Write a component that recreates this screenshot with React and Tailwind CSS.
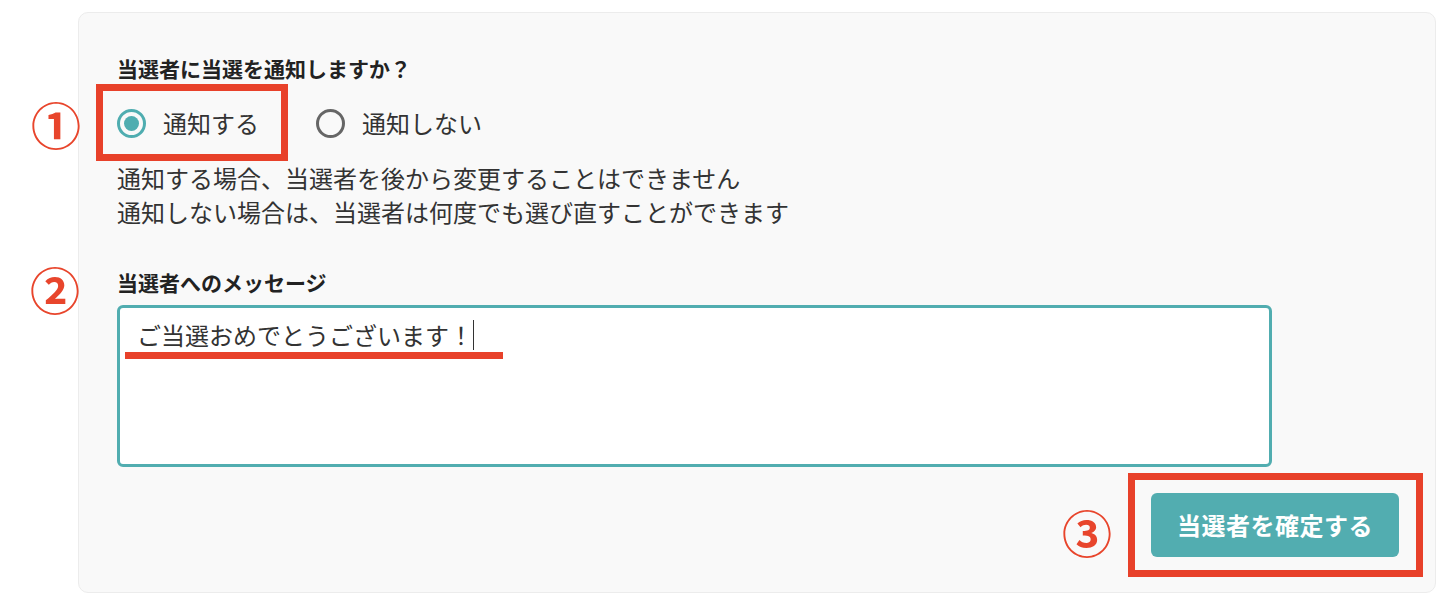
import React from 'react';

const jp = { fontFamily: '"Noto Sans CJK JP", "Noto Sans", sans-serif' };

// 注釈用の丸数字
const Marker = ({ label, className }) => (
    <div
        className={`absolute flex items-center justify-center w-[48px] h-[48px] text-[50px] leading-none font-bold text-[#e8452c] ${className}`}
    >
        {label}
    </div>
);

const Radio = ({ checked, label }) => (
    <label className="flex items-center gap-[17px] cursor-pointer">
        <span
            className={`w-[29px] h-[29px] rounded-full border-[3px] flex items-center justify-center ${
                checked ? 'border-[#4fadb0]' : 'border-[#666]'
            }`}
        >
            {checked && <span className="w-[15px] h-[15px] rounded-full bg-[#4fadb0]" />}
        </span>
        <span className="text-[24px] leading-[36px] text-[#333]">{label}</span>
    </label>
);

export default function App() {
    return (
        <div className="relative min-h-screen bg-white pl-[78px] pr-[18px] pt-[12px]" style={jp}>
            <div className="bg-[#f9f9f9] border border-[#ececec] rounded-[10px] pl-[38px] pr-[36px] pt-[40px] pb-[35px]">
                <h3 className="text-[21px] leading-[30px] font-bold text-[#222]">当選者に当選を通知しますか？</h3>

                <div className="flex items-center gap-[57px] mt-[22px]">
                    <Radio checked label="通知する" />
                    <Radio label="通知しない" />
                </div>

                <div className="mt-[20px] text-[24px] leading-[34px] text-[#333]">
                    <p>通知する場合、当選者を後から変更することはできません</p>
                    <p>通知しない場合は、当選者は何度でも選び直すことができます</p>
                </div>

                <h3 className="mt-[38px] text-[21px] leading-[30px] font-bold text-[#222]">当選者へのメッセージ</h3>

                <div className="mt-[8px] w-[1155px] h-[162px] bg-white border-[3px] border-[#51adb0] rounded-[6px] pl-[17px] pt-[9px]">
                    <p className="text-[24px] leading-[36px] text-[#333] flex items-center">
                        ご当選おめでとうございます！
                        <span className="inline-block w-px h-[30px] bg-[#333]" />
                    </p>
                </div>

                <div className="flex justify-end mt-[26px]">
                    <button className="w-[248px] h-[64px] rounded-[6px] bg-[#52adb0] text-white text-[24px] font-bold tracking-[0.5px]">
                        当選者を確定する
                    </button>
                </div>
            </div>

            {/* 注釈 */}
            <Marker label="①" className="left-[32px] top-[99px]" />
            <Marker label="②" className="left-[31px] top-[264px]" />
            <Marker label="③" className="left-[1063px] top-[507px]" />

            <div className="absolute left-[96px] top-[84px] w-[192px] h-[77px] border-[7px] border-[#e8412a]" />
            <div className="absolute left-[1128px] top-[473px] w-[295px] h-[104px] border-[7px] border-[#e8412a]" />
            <div className="absolute left-[125px] top-[352px] w-[378px] h-[7px] bg-[#e8412a]" />
        </div>
    );
}
